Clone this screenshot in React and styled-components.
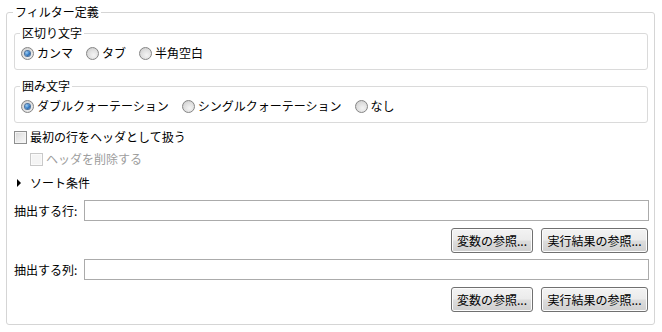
import styled, { createGlobalStyle } from "styled-components";

const GlobalStyle = createGlobalStyle`
  html, body {
    margin: 0;
    background: #ffffff;
  }
  body {
    font-family: "Noto Sans CJK JP", "Noto Sans", sans-serif;
    font-size: 12px;
    line-height: 16px;
    color: #000000;
  }
`;

const Page = styled.div`
  width: 662px;
  height: 332px;
  box-sizing: border-box;
  padding: 4px 0 0 6px;
`;

const Group = styled.fieldset`
  margin: ${props => props.$mt || 0}px 0 0 0;
  min-width: 0;
  box-sizing: border-box;
  width: ${props => props.$outer ? "649px" : "auto"};
  padding: ${props => props.$outer ? "5px 6px 12px 7px" : "4px 6px 8px 6px"};
  border: 1px solid ${props => props.$outer ? "#d5d5d5" : "#dadada"};
  border-radius: 3px;
`;

/* Chrome offsets the legend by the fieldset's padding-left, hence the pull-back */
const Legend = styled.legend`
  margin-left: -1px;
  padding: 0 2px;
  line-height: 16px;
`;

const Stack = styled.div`
  display: flex;
  flex-direction: column;
`;

const RadioRow = styled.div`
  display: flex;
  align-items: center;
  height: 16px;
`;

const Option = styled.label`
  display: flex;
  align-items: center;
  gap: 3px;
  margin-right: 13px;
  white-space: nowrap;
`;

const Radio = styled.span`
  position: relative;
  width: 13px;
  height: 13px;
  box-sizing: border-box;
  border-radius: 50%;
  border: 1px solid #858585;
  background: radial-gradient(circle at 60% 65%, #f4f4f4 0%, #dedede 55%, #c4c4c4 100%);
  flex: none;

  &::after {
    content: "";
    display: ${props => props.$checked ? "block" : "none"};
    position: absolute;
    left: 3px;
    top: 3px;
    width: 5px;
    height: 5px;
    border-radius: 50%;
    background: radial-gradient(circle at 35% 35%, #9fd0f5 0%, #2f78c4 55%, #163f7a 100%);
    box-shadow: 0 0 0 1px #4e739d;
  }
`;

const CheckRow = styled.label`
  display: flex;
  align-items: center;
  gap: 3px;
  height: 16px;
  margin-top: ${props => props.$mt || 0}px;
  padding-left: ${props => props.$indent || 0}px;
  color: ${props => props.$disabled ? "#9d9d9d" : "#000000"};
`;

const Check = styled.span`
  width: 13px;
  height: 13px;
  box-sizing: border-box;
  border: 1px solid ${props => props.$disabled ? "#c9c9c9" : "#8e8f8f"};
  background: ${props => props.$disabled
    ? "#f4f4f4"
    : "linear-gradient(135deg, #d6d6d6 0%, #eaeaea 50%, #f8f8f8 100%)"};
  box-shadow: inset 0 0 0 1px ${props => props.$disabled ? "#fafafa" : "#f4f4f4"};
  flex: none;
`;

const SortRow = styled.div`
  display: flex;
  align-items: center;
  height: 16px;
  margin-top: ${props => props.$mt || 0}px;
`;

const Arrow = styled.span`
  width: 0;
  height: 0;
  margin: 0 9px 0 3px;
  border-left: 4px solid #000000;
  border-top: 4px solid transparent;
  border-bottom: 4px solid transparent;
`;

const FieldRow = styled.div`
  display: flex;
  align-items: center;
  margin-top: ${props => props.$mt || 0}px;
`;

const FieldLabel = styled.span`
  width: 70px;
  flex: none;
  white-space: nowrap;
`;

const TextInput = styled.input`
  flex: 1;
  height: 21px;
  box-sizing: border-box;
  margin: 0 -1px 0 0;
  padding: 0 3px;
  border: 1px solid #ababab;
  outline: none;
  font: inherit;
`;

const ButtonRow = styled.div`
  display: flex;
  justify-content: flex-end;
  gap: 8px;
  margin-top: ${props => props.$mt || 0}px;
`;

const Button = styled.button`
  width: ${props => props.$w}px;
  height: 25px;
  box-sizing: border-box;
  padding: 0;
  border: 1px solid #707070;
  border-radius: 3px;
  background: linear-gradient(#f3f3f3 0%, #ebebeb 48%, #dddddd 52%, #cfcfcf 100%);
  box-shadow: inset 0 0 0 1px #fcfcfc;
  font: inherit;
  color: #000000;
  white-space: nowrap;
`;

function RadioGroup({ title, options, selected, mt }) {
  return (
    <Group $mt={mt}>
      <Legend>{title}</Legend>
      <RadioRow>
        {options.map((opt, i) => (
          <Option key={opt}>
            <Radio $checked={i === selected} />
            {opt}
          </Option>
        ))}
      </RadioRow>
    </Group>
  );
}

function RefButtons({ mt }) {
  return (
    <ButtonRow $mt={mt}>
      <Button $w={82}>変数の参照...</Button>
      <Button $w={107}>実行結果の参照...</Button>
    </ButtonRow>
  );
}

export default function App() {
  return (
    <>
      <GlobalStyle />
      <Page>
        <Group $outer>
          <Legend>フィルター定義</Legend>
          <Stack>
            <RadioGroup title="区切り文字" options={["カンマ", "タブ", "半角空白"]} selected={0} />
            <RadioGroup
              title="囲み文字"
              options={["ダブルクォーテーション", "シングルクォーテーション", "なし"]}
              selected={0}
              mt={8}
            />
            <CheckRow $mt={6}>
              <Check />
              最初の行をヘッダとして扱う
            </CheckRow>
            <CheckRow $mt={6} $indent={16} $disabled>
              <Check $disabled />
              ヘッダを削除する
            </CheckRow>
            <SortRow $mt={8}>
              <Arrow />
              ソート条件
            </SortRow>
            <FieldRow $mt={9}>
              <FieldLabel>抽出する行:</FieldLabel>
              <TextInput />
            </FieldRow>
            <RefButtons mt={7} />
            <FieldRow $mt={6}>
              <FieldLabel>抽出する列:</FieldLabel>
              <TextInput />
            </FieldRow>
            <RefButtons mt={7} />
          </Stack>
        </Group>
      </Page>
    </>
  );
}
